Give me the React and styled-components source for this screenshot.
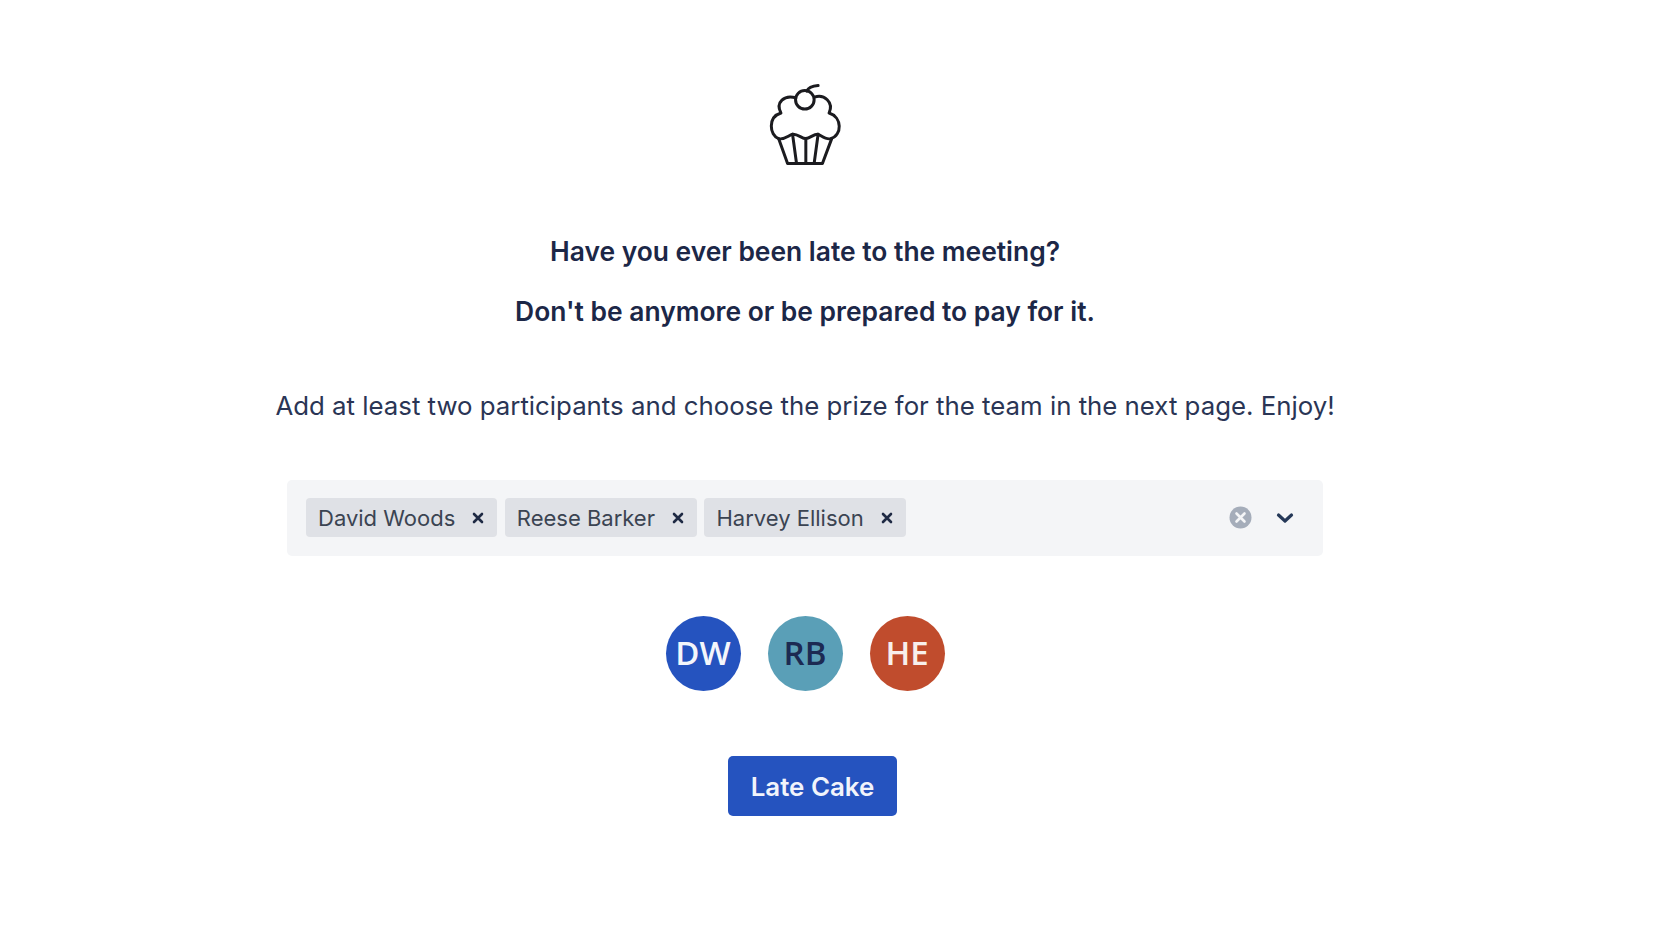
import styled, { createGlobalStyle } from "styled-components";

const participants = [
  { name: "David Woods", initials: "DW", bg: "#2553bf", fg: "#f4f6fb" },
  { name: "Reese Barker", initials: "RB", bg: "#5a9fb7", fg: "#1c2a52" },
  { name: "Harvey Ellison", initials: "HE", bg: "#c04c2d", fg: "#f8efec" },
];

const CupcakeIcon = () => (
  <svg width="78" height="85" viewBox="80 35 235 255" fill="none" stroke="#1b1b1f" strokeWidth="9" strokeLinecap="round" strokeLinejoin="round">
    <circle cx="197" cy="88" r="28" />
    <path d="M203 62C207 52 220 46 237 45" />
    <path d="M170 82C135 72 108 95 125 128C85 140 90 195 118 205C135 210 148 195 160 192C175 190 188 205 200 205C212 205 225 190 237 192C245 195 262 210 275 205C310 195 310 140 270 128C285 95 255 70 226 80" />
    <path d="M118 205L145 280H250L278 205" />
    <path d="M160 192L172 280M200 205V280M237 192L225 280" />
  </svg>
);

const App = () => {
  return (
    <>
      <GlobalStyle />
      <Page>
        <CupcakeIcon />
        <Headline>Have you ever been late to the meeting?</Headline>
        <Headline $second>Don't be anymore or be prepared to pay for it.</Headline>
        <Intro>Add at least two participants and choose the prize for the team in the next page. Enjoy!</Intro>
        <SelectBox>
          <ChipList>
            {participants.map((p) => (
              <Chip key={p.name}>
                {p.name}
                <ChipRemove>
                  <svg width="12" height="12" viewBox="0 0 12 12" stroke="#1f2a44" strokeWidth="2.6" strokeLinecap="round">
                    <path d="M2 2L10 10M10 2L2 10" />
                  </svg>
                </ChipRemove>
              </Chip>
            ))}
          </ChipList>
          <ClearIcon>
            <svg width="23" height="23" viewBox="0 0 23 23">
              <circle cx="11.5" cy="11.5" r="11" fill="#a5adba" />
              <path d="M7.5 7.5L15.5 15.5M15.5 7.5L7.5 15.5" stroke="#f4f5f7" strokeWidth="2.6" strokeLinecap="round" />
            </svg>
          </ClearIcon>
          <svg width="18" height="12" viewBox="0 0 18 12" fill="none" stroke="#253858" strokeWidth="3.2" strokeLinecap="round" strokeLinejoin="round">
            <path d="M2.5 3L9 9L15.5 3" />
          </svg>
        </SelectBox>
        <AvatarRow>
          {participants.map((p) => (
            <Avatar key={p.initials} $bg={p.bg} $fg={p.fg}>{p.initials}</Avatar>
          ))}
        </AvatarRow>
        <SubmitBtn>Late Cake</SubmitBtn>
      </Page>
    </>
  );
};

export default App;

const GlobalStyle = createGlobalStyle`
  body {
    margin: 0;
    background: #fff;
    font-family: Inter, "Liberation Sans", sans-serif;
    color: #172b4d;
  }
`;

const Page = styled.div`
  height: 928px;
  padding: 82px 46px 0 0;
  box-sizing: border-box;
  display: flex;
  flex-direction: column;
  align-items: center;
  overflow: hidden;
`;

const Headline = styled.h2`
  margin: ${(p) => (p.$second ? "30px" : "69px")} 0 0;
  font-size: 26.4px;
  line-height: 30px;
  font-weight: 600;
  white-space: nowrap;
  color: #1c2747;
`;

const Intro = styled.p`
  margin: 65px 0 0;
  font-size: 25.8px;
  line-height: 30px;
  font-weight: 400;
  white-space: nowrap;
  color: #2a3555;
`;

const SelectBox = styled.div`
  width: 1036px;
  height: 76px;
  margin-top: 59px;
  padding: 0 29px 1px 19px;
  box-sizing: border-box;
  display: flex;
  align-items: center;
  background: #f4f5f7;
  border-radius: 5px;
`;

const ChipList = styled.div`
  flex: 1;
  display: flex;
  gap: 7.5px;
`;

const Chip = styled.div`
  height: 39px;
  padding: 0 13px 0 12px;
  display: flex;
  align-items: center;
  background: #dfe1e6;
  border-radius: 4px;
  font-size: 22px;
  color: #3b4452;
`;

const ChipRemove = styled.span`
  margin-left: 17px;
  display: flex;
`;

const ClearIcon = styled.span`
  margin-right: 24px;
  display: flex;
`;

const AvatarRow = styled.div`
  margin-top: 60px;
  display: flex;
  gap: 27px;
`;

const Avatar = styled.div`
  width: 75px;
  height: 75px;
  padding-bottom: 2px;
  box-sizing: border-box;
  border-radius: 50%;
  display: flex;
  align-items: center;
  justify-content: center;
  background: ${(p) => p.$bg};
  color: ${(p) => p.$fg};
  font-family: "Open Sans", sans-serif;
  font-size: 33px;
  font-weight: 600;
`;

const SubmitBtn = styled.button`
  width: 169px;
  height: 60px;
  margin: 65px 0 0 15px;
  border: none;
  border-radius: 5px;
  background: #2553bf;
  color: #f1f4fb;
  font-family: Inter, sans-serif;
  font-size: 25.9px;
  font-weight: 600;
`;
